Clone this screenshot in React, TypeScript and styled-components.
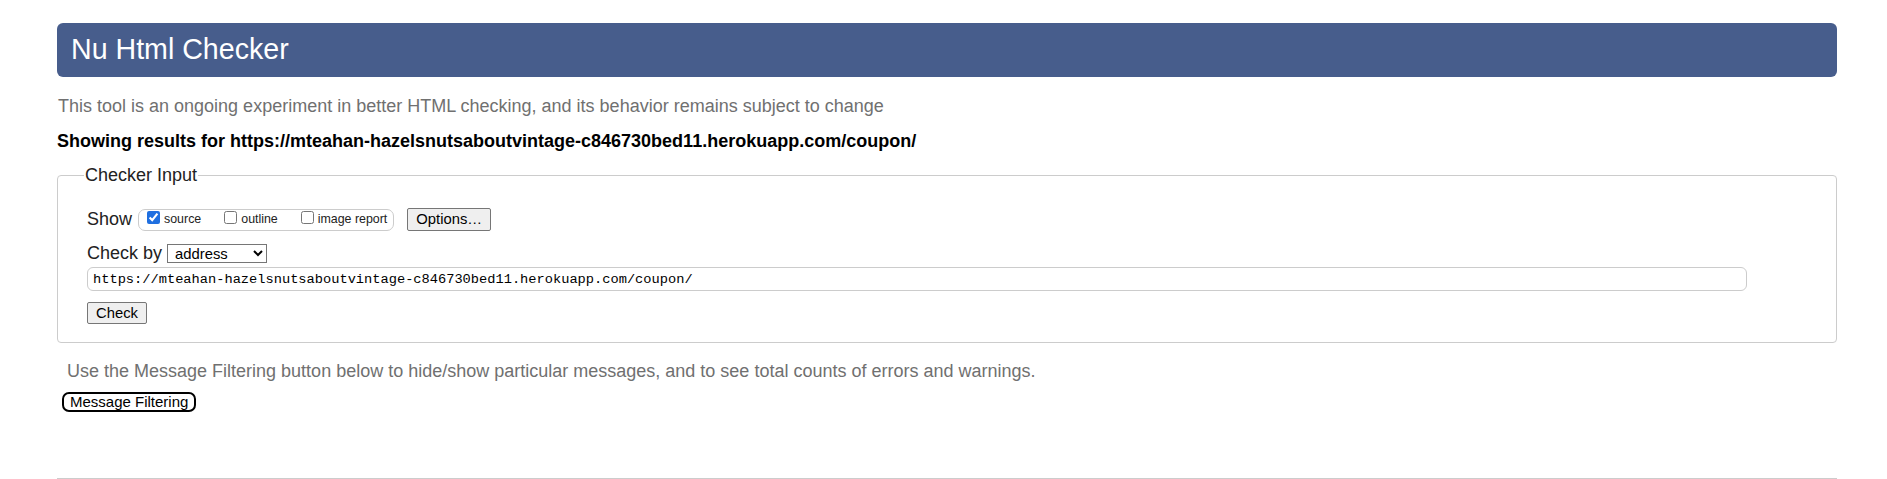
import React from "react";
import styled, { createGlobalStyle } from "styled-components";

const GlobalStyle = createGlobalStyle`
  html, body { margin: 0; padding: 0; background: #ffffff; }
  body { font-family: "Liberation Sans", Arial, sans-serif; color: #000; }
`;

const Page = styled.div`
  box-sizing: border-box;
  width: 1887px;
  padding: 23px 50px 0 57px;
  display: flex;
  flex-direction: column;
`;

const Header = styled.h1`
  margin: 0;
  height: 54px;
  box-sizing: border-box;
  padding-left: 14px;
  background: #475d8c;
  border-radius: 6px;
  color: #ffffff;
  font-size: 28.6px;
  font-weight: 400;
  line-height: 53px;
`;

const Intro = styled.p`
  margin: 19px 0 0 1px;
  font-size: 18px;
  line-height: 20px;
  color: #707070;
`;

const Showing = styled.p`
  margin: 15px 0 0 0;
  font-size: 18px;
  line-height: 20px;
  font-weight: 700;
  color: #000;
`;

const Fieldset = styled.fieldset`
  margin: 14px 0 0 0;
  padding: 22px 89px 18px 29px;
  border: 1px solid #cccccc;
  border-radius: 4px;
  min-width: 0;
  display: flex;
  flex-direction: column;
`;

const Legend = styled.legend`
  font-size: 18px;
  line-height: 20px;
  color: #222;
  padding: 0 1px;
  margin-left: -3px;
`;

const Row = styled.div<{ $top: number }>`
  display: flex;
  align-items: center;
  margin-top: ${(p) => p.$top}px;
`;

const RowLabel = styled.span`
  font-size: 18px;
  line-height: 20px;
  color: #222;
`;

const Pill = styled.span`
  display: inline-flex;
  align-items: baseline;
  box-sizing: border-box;
  height: 22px;
  margin-left: 6px;
  padding: 0 6px 0 4px;
  border: 1px solid #cccccc;
  border-radius: 7px;
  align-self: flex-start;
  margin-top: 2px;
`;

const CheckLabel = styled.label<{ $gap: number }>`
  display: inline-flex;
  align-items: baseline;
  font-size: 12.4px;
  line-height: 18px;
  color: #222;
  margin-left: ${(p) => p.$gap}px;
`;

const Box = styled.input`
  width: 13px;
  height: 13px;
  margin: 0 4px 0 4px;
  position: relative;
  top: 1px;
  accent-color: #1f6fe0;
`;

const GreyButton = styled.button<{ $size: number }>`
  font-family: "Liberation Sans", Arial, sans-serif;
  font-size: ${(p) => p.$size}px;
  line-height: 17px;
  color: #000;
  background: #efefef;
  border: 1px solid #767676;
  border-radius: 2px;
  padding: 2px 8px;
  cursor: pointer;
`;

const OptionsButton = styled(GreyButton)`
  margin-left: 13px;
  height: 23px;
`;

const Select = styled.select`
  margin-left: 5px;
  width: 100px;
  height: 19px;
  box-sizing: border-box;
  font-family: "Liberation Sans", Arial, sans-serif;
  font-size: 14.8px;
  color: #000;
  background: #fff;
  border: 1px solid #767676;
  border-radius: 0;
  padding: 0 0 0 3px;
`;

const UrlInput = styled.input`
  width: 100%;
  height: 24px;
  box-sizing: border-box;
  margin: 0;
  padding: 0 5px;
  font-family: "Liberation Mono", "DejaVu Sans Mono", monospace;
  font-size: 13.7px;
  color: #000;
  border: 1px solid #cccccc;
  border-radius: 6px;
  outline: none;
`;

const CheckButton = styled(GreyButton)`
  height: 22px;
  padding: 0 8px;
  align-self: flex-start;
`;

const Note = styled.p`
  margin: 18px 0 0 10px;
  font-size: 18px;
  line-height: 20px;
  color: #707070;
`;

const FilterButton = styled.button`
  align-self: flex-start;
  margin: 11px 0 0 5px;
  height: 20px;
  box-sizing: border-box;
  padding: 0 6px;
  font-family: "Liberation Sans", Arial, sans-serif;
  font-size: 15px;
  line-height: 16px;
  color: #000;
  background: #fff;
  border: 2px solid #000;
  border-radius: 7px;
  cursor: pointer;
`;

const Rule = styled.hr`
  margin: 66px 0 0 0;
  border: 0;
  border-top: 1px solid #cccccc;
  height: 0;
`;

export default function App() {
  return (
    <>
      <GlobalStyle />
      <Page>
        <Header>Nu Html Checker</Header>
        <Intro>
          This tool is an ongoing experiment in better HTML checking, and its behavior remains subject to change
        </Intro>
        <Showing>
          Showing results for https://mteahan-hazelsnutsaboutvintage-c846730bed11.herokuapp.com/coupon/
        </Showing>
        <Fieldset>
          <Legend>Checker Input</Legend>
          <Row $top={0}>
            <RowLabel>Show</RowLabel>
            <Pill>
              <CheckLabel $gap={0}>
                <Box type="checkbox" defaultChecked />
                source
              </CheckLabel>
              <CheckLabel $gap={19}>
                <Box type="checkbox" />
                outline
              </CheckLabel>
              <CheckLabel $gap={19}>
                <Box type="checkbox" />
                image report
              </CheckLabel>
            </Pill>
            <OptionsButton $size={14.8} type="button">Options…</OptionsButton>
          </Row>
          <Row $top={12}>
            <RowLabel>Check by</RowLabel>
            <Select defaultValue="address">
              <option value="address">address</option>
              <option value="file">file upload</option>
              <option value="text">text input</option>
            </Select>
          </Row>
          <Row $top={4}>
            <UrlInput
              type="url"
              defaultValue="https://mteahan-hazelsnutsaboutvintage-c846730bed11.herokuapp.com/coupon/"
            />
          </Row>
          <Row $top={11}>
            <CheckButton $size={14.8} type="button">Check</CheckButton>
          </Row>
        </Fieldset>
        <Note>
          Use the Message Filtering button below to hide/show particular messages, and to see total counts of errors and warnings.
        </Note>
        <FilterButton type="button">Message Filtering</FilterButton>
        <Rule />
      </Page>
    </>
  );
}
